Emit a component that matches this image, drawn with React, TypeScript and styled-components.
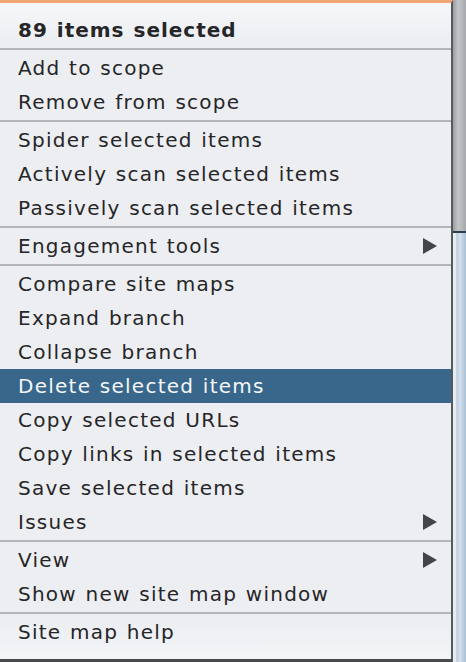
import styled, { createGlobalStyle } from 'styled-components';

const GlobalStyle = createGlobalStyle`
  html, body {
    margin: 0;
    padding: 0;
    background: #e9ebef;
  }
`;

type Entry =
  | { kind: 'header'; label: string }
  | { kind: 'item'; label: string; submenu?: boolean; active?: boolean }
  | { kind: 'sep' };

const entries: Entry[] = [
  { kind: 'header', label: '89 items selected' },
  { kind: 'sep' },
  { kind: 'item', label: 'Add to scope' },
  { kind: 'item', label: 'Remove from scope' },
  { kind: 'sep' },
  { kind: 'item', label: 'Spider selected items' },
  { kind: 'item', label: 'Actively scan selected items' },
  { kind: 'item', label: 'Passively scan selected items' },
  { kind: 'sep' },
  { kind: 'item', label: 'Engagement tools', submenu: true },
  { kind: 'sep' },
  { kind: 'item', label: 'Compare site maps' },
  { kind: 'item', label: 'Expand branch' },
  { kind: 'item', label: 'Collapse branch' },
  { kind: 'item', label: 'Delete selected items', active: true },
  { kind: 'item', label: 'Copy selected URLs' },
  { kind: 'item', label: 'Copy links in selected items' },
  { kind: 'item', label: 'Save selected items' },
  { kind: 'item', label: 'Issues', submenu: true },
  { kind: 'sep' },
  { kind: 'item', label: 'View', submenu: true },
  { kind: 'item', label: 'Show new site map window' },
  { kind: 'sep' },
  { kind: 'item', label: 'Site map help' },
];

const Screen = styled.div`
  display: flex;
  width: 466px;
  height: 662px;
  overflow: hidden;
`;

const Menu = styled.div`
  width: 453px;
  height: 662px;
  box-sizing: border-box;
  flex-shrink: 0;
  display: flex;
  flex-direction: column;
  padding: 10px 0 10px;
  border-top: 3px solid #f2a574;
  border-right: 2px solid #58595c;
  border-bottom: 3px solid #4a4b4e;
  background: linear-gradient(
    to bottom,
    #f6f7f9 0px,
    #edeef2 40px,
    #edeef2 620px,
    #f4f5f7 100%
  );
  font-family: 'DejaVu Sans', 'Liberation Sans', sans-serif;
  font-size: 20px;
  color: #262628;
`;

const Row = styled.div<{ $active?: boolean; $bold?: boolean }>`
  height: 34px;
  flex-shrink: 0;
  display: flex;
  align-items: center;
  justify-content: space-between;
  padding: 0 14px 0 18px;
  font-weight: ${(p) => (p.$bold ? 700 : 400)};
  letter-spacing: ${(p) => (p.$bold ? '1px' : '1.25px')};
  word-spacing: 1px;
  background: ${(p) => (p.$active ? '#38678b' : 'transparent')};
  color: ${(p) => (p.$active ? '#f4f6f8' : 'inherit')};
  white-space: nowrap;
`;

const Separator = styled.div`
  height: 4px;
  flex-shrink: 0;
  display: flex;
  align-items: center;

  &::after {
    content: '';
    flex: 1;
    height: 2px;
    background: #b2b5b9;
  }
`;

const Arrow = styled.span`
  width: 0;
  height: 0;
  border-top: 8px solid transparent;
  border-bottom: 8px solid transparent;
  border-left: 14px solid #444548;
`;

const Backdrop = styled.div`
  flex: 1;
  display: flex;
  flex-direction: column;
`;

const BackdropTop = styled.div`
  height: 231px;
  background: linear-gradient(to right, #9c9ea2, #c2c4c8 40%, #a6a8ac);
  border-bottom: 2px solid #2c3e52;
`;

const BackdropBottom = styled.div`
  flex: 1;
  background: linear-gradient(
    to right,
    #e4ecf4 0px,
    #e4ecf4 3px,
    #c4d4e4 3px,
    #c4d4e4 6px,
    #dbe5ef 6px,
    #a9bfd4 100%
  );
`;

export default function App() {
  return (
    <>
      <GlobalStyle />
      <Screen>
        <Menu>
          {entries.map((e, i) => {
            if (e.kind === 'sep') return <Separator key={i} />;
            if (e.kind === 'header')
              return (
                <Row key={i} $bold>
                  {e.label}
                </Row>
              );
            return (
              <Row key={i} $active={e.active}>
                <span>{e.label}</span>
                {e.submenu && <Arrow />}
              </Row>
            );
          })}
        </Menu>
        <Backdrop>
          <BackdropTop />
          <BackdropBottom />
        </Backdrop>
      </Screen>
    </>
  );
}
